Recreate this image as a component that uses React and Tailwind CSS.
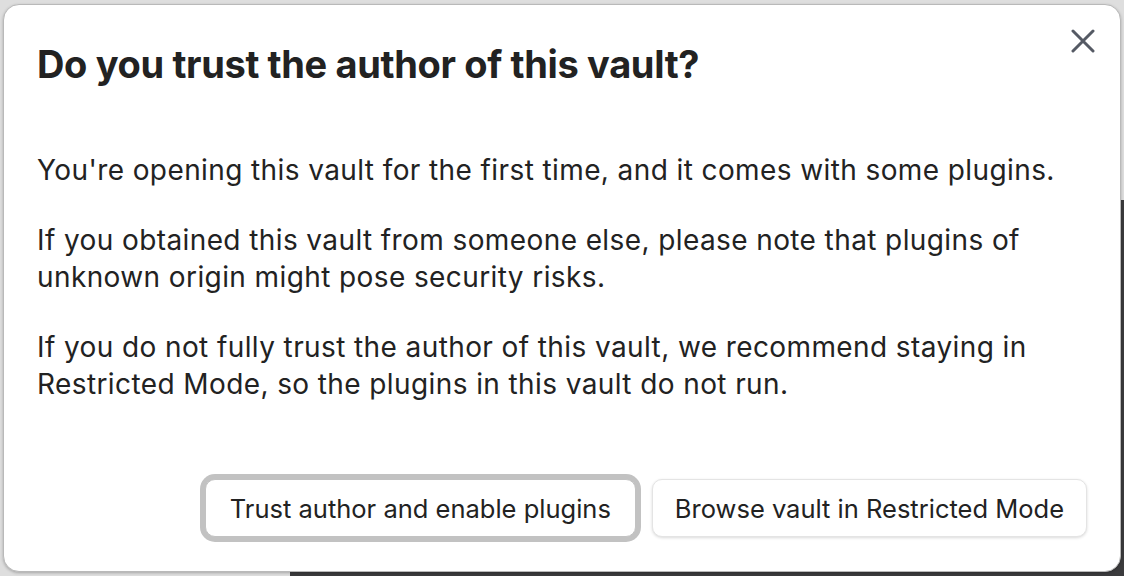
import React from 'react';

const CloseIcon = () => (
    <svg width="24" height="24" viewBox="0 0 24 24" fill="none" stroke="currentColor" strokeWidth="3" strokeLinecap="round">
        <path d="M2 2 L22 22 M22 2 L2 22" />
    </svg>
);

const TrustVaultModal = () => {
    return (
        <div className="relative w-[1124px] h-[576px] overflow-hidden bg-[#dedede]" style={{ fontFamily: 'Inter, "Noto Sans", sans-serif' }}>
            {/* app window peeking out behind the dialog */}
            <div className="absolute left-[290px] top-[200px] right-0 bottom-0 bg-[#3b3b3d]" />

            <div className="relative ml-[3px] mt-[4px] w-[1118px] h-[568px] bg-white border border-[#b9b9b9] rounded-[16px] shadow-[0_1px_3px_rgba(0,0,0,0.25)] flex flex-col">
                <button className="absolute right-[25px] top-[24px] text-[#555a64]">
                    <CloseIcon />
                </button>

                {/* Title */}
                <div className="pl-[33px] pt-[36px]">
                    <h2 className="text-[38px] leading-[46px] font-bold text-[#222222] tracking-[-0.35px]">Do you trust the author of this vault?</h2>
                </div>

                {/* Body */}
                <div className="pl-[33px] pr-[36px] pt-[65px] flex flex-col gap-[33px] text-[28px] leading-[37px] tracking-[0.4px] text-[#222222]">
                    <p>You're opening this vault for the first time, and it comes with some plugins.</p>
                    <p>If you obtained this vault from someone else, please note that plugins of unknown origin might pose security risks.</p>
                    <p>If you do not fully trust the author of this vault, we recommend staying in Restricted Mode, so the plugins in this vault do not run.</p>
                </div>

                {/* Actions */}
                <div className="mt-auto flex justify-end items-center gap-[16px] pr-[33px] pb-[34px]">
                    <button className="h-[58px] pt-[2px] px-[24px] rounded-[10px] bg-white text-[25.5px] text-[#222222] border border-[#c2c2c2] shadow-[0_0_0_5px_#c2c2c2]">
                        Trust author and enable plugins
                    </button>
                    <button className="h-[58px] pt-[2px] px-[22px] rounded-[10px] bg-white text-[25.5px] text-[#222222] border border-[#e4e4e4] shadow-[0_1px_3px_rgba(0,0,0,0.15)]">
                        Browse vault in Restricted Mode
                    </button>
                </div>
            </div>
        </div>
    );
};

export default TrustVaultModal;
